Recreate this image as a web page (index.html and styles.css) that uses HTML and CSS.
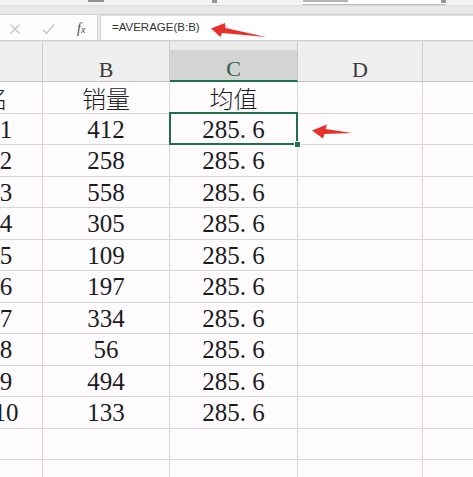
FILE: index.html
```html
<!DOCTYPE html>
<html lang="zh-CN">
<head>
<meta charset="utf-8">
<title>AVERAGE</title>
<link rel="stylesheet" href="styles.css">
</head>
<body>
<div class="page">
  <div class="top">
    <div class="band">
      <span class="mark m1"></span>
      <span class="mark m2"></span>
      <span class="tbox"><span class="mark m3"></span><span class="mark m4"></span></span>
    </div>
  </div>
  <div class="fbar">
    <div class="fbtns">
      <svg class="ico" width="12" height="12" viewBox="0 0 12 12"><path d="M1.5 1.5 L10.5 10.5 M10.5 1.5 L1.5 10.5" stroke="#c4c4c4" stroke-width="1.3" fill="none"/></svg>
      <svg class="ico" width="13" height="12" viewBox="0 0 13 12"><path d="M1 6.5 L4.5 10.5 L12 1.5" stroke="#c4c4c4" stroke-width="1.3" fill="none"/></svg>
      <span class="fx"><i>f</i><i class="sx">x</i></span>
    </div>
    <div class="fsep"></div>
    <div class="finput">=AVERAGE(B:B)</div>
  </div>
  <div class="gap"></div>
  <div class="sheet">
    <div class="hd"></div>
    <div class="hd">B</div>
    <div class="hd sel">C</div>
    <div class="hd">D</div>
    <div class="hd"></div>

    <div class="c ta cjk">排名</div>
    <div class="c cjk">销量</div>
    <div class="c cjk">均值</div>
    <div class="c"></div>
    <div class="c"></div>

    <div class="c">1</div><div class="c">412</div><div class="c active">285<span class="dot">.</span>6</div><div class="c"></div><div class="c"></div>
    <div class="c">2</div><div class="c">258</div><div class="c">285<span class="dot">.</span>6</div><div class="c"></div><div class="c"></div>
    <div class="c">3</div><div class="c">558</div><div class="c">285<span class="dot">.</span>6</div><div class="c"></div><div class="c"></div>
    <div class="c">4</div><div class="c">305</div><div class="c">285<span class="dot">.</span>6</div><div class="c"></div><div class="c"></div>
    <div class="c">5</div><div class="c">109</div><div class="c">285<span class="dot">.</span>6</div><div class="c"></div><div class="c"></div>
    <div class="c">6</div><div class="c">197</div><div class="c">285<span class="dot">.</span>6</div><div class="c"></div><div class="c"></div>
    <div class="c">7</div><div class="c">334</div><div class="c">285<span class="dot">.</span>6</div><div class="c"></div><div class="c"></div>
    <div class="c">8</div><div class="c">56</div><div class="c">285<span class="dot">.</span>6</div><div class="c"></div><div class="c"></div>
    <div class="c">9</div><div class="c">494</div><div class="c">285<span class="dot">.</span>6</div><div class="c"></div><div class="c"></div>
    <div class="c">10</div><div class="c">133</div><div class="c">285<span class="dot">.</span>6</div><div class="c"></div><div class="c"></div>
    <div class="c"></div><div class="c"></div><div class="c"></div><div class="c"></div><div class="c"></div>
    <div class="c"></div><div class="c"></div><div class="c"></div><div class="c"></div><div class="c"></div>
  </div>
  <svg class="arrows" width="473" height="477" viewBox="0 0 473 477">
    <path d="M211 28.5 L225 23 L225.5 28 L266 37 L222 33 L220.5 37 Z" fill="#e8302a"/>
    <path d="M312 130.5 L327 124.5 L325.5 129 L352 133 L324.5 134 L323 138.5 Z" fill="#e8302a"/>
  </svg>
</div>
</body>
</html>
```
FILE: styles.css
```css
html, body {
  margin: 0;
  padding: 0;
  background: #fefcfe;
  overflow: hidden;
}
.page {
  position: relative;
  width: 473px;
  height: 477px;
  overflow: hidden;
}
.top {
  height: 15px;
  background: #e8e8e8;
  box-sizing: border-box;
  border-bottom: 1px solid #d2d2d2;
}
.band {
  height: 5px;
  background: #f4f4f4;
  border-bottom: 1px solid #dcdcdc;
  display: flex;
  align-items: flex-start;
}
.mark {
  display: block;
  height: 2px;
  background: #6a6a6a;
  opacity: 0.7;
}
.m1 { width: 16px; margin-left: 88px; }
.m2 { width: 5px; margin-left: 108px; height: 3px; }
.tbox {
  display: flex;
  align-items: flex-start;
  margin-left: 85px;
  width: 144px;
  height: 4px;
  background: #ffffff;
  border-bottom: 1px solid #bdbdbd;
}
.m3 { width: 45px; margin-left: 1px; opacity: 0.5; }
.m4 { width: 5px; height: 3px; margin-left: auto; }
.fbar {
  display: flex;
  height: 25px;
  background: #fdfdfd;
  border-bottom: 1px solid #cfcfcf;
}
.fbtns {
  width: 97px;
  display: flex;
  align-items: center;
  padding-top: 2px;
  box-sizing: border-box;
}
.ico { display: block; }
.fbtns .ico:first-child { margin-left: 9px; }
.fbtns .ico:nth-child(2) { margin-left: 21px; }
.fx {
  margin-left: 22px;
  font-family: "Liberation Serif", serif;
  font-size: 14px;
  color: #4a4a4a;
  line-height: 1;
}
.fx .sx { font-size: 10px; }
.fsep {
  width: 2px;
  background: #ececec;
  border-left: 1px solid #d4d4d4;
  border-right: 1px solid #d4d4d4;
}
.finput {
  flex: 1;
  background: #ffffff;
  border-top: 1px solid #dedede;
  font-family: "Liberation Sans", Arial, sans-serif;
  font-size: 11.5px;
  color: #333333;
  line-height: 23px;
  padding-left: 11px;
}
.gap {
  height: 1px;
  background: #e2e2e2;
}
.sheet {
  display: grid;
  grid-template-columns: 73px 127px 128px 125px 130px;
  grid-template-rows: 40px repeat(13, 31.5px);
  margin-left: -30px;
}
.hd {
  box-sizing: border-box;
  background: #efefef;
  border-right: 1px solid #cacaca;
  border-bottom: 1px solid #c2c2c2;
  display: flex;
  align-items: center;
  justify-content: center;
  padding-top: 16px;
  font-family: "Liberation Serif", serif;
  font-size: 22px;
  color: #3a3a3a;
}
.hd.sel {
  background: linear-gradient(#eaeaea 0 8px, #d4d4d4 8px);
  border-bottom: 2px solid #1f6f48;
  color: #2d5a45;
}
.c {
  position: relative;
  box-sizing: border-box;
  border-right: 1px solid #d8d4d8;
  border-bottom: 1px solid #d8d4d8;
  display: flex;
  align-items: center;
  justify-content: center;
  padding-top: 2px;
  font-family: "Liberation Serif", serif;
  font-size: 25px;
  color: #1c1c1c;
  white-space: nowrap;
}
.c.cjk {
  font-family: "Noto Sans CJK SC", sans-serif;
  font-size: 24px;
  font-weight: 300;
  padding-top: 0;
}
.c.ta {
  justify-content: flex-end;
  padding-right: 34px;
  overflow: hidden;
}
.dot {
  display: inline-block;
  width: 0.5em;
  text-align: left;
}
.active::after {
  content: "";
  position: absolute;
  left: -1px;
  top: -2px;
  right: -1px;
  bottom: -1px;
  border: 2px solid #1f6f48;
}
.active::before {
  content: "";
  position: absolute;
  right: -4px;
  bottom: -4px;
  width: 5px;
  height: 5px;
  background: #1f6f48;
  border: 1px solid #ffffff;
  z-index: 2;
}
.arrows {
  position: absolute;
  left: 0;
  top: 0;
  pointer-events: none;
}
```
